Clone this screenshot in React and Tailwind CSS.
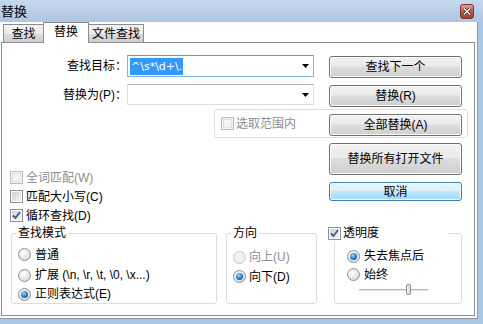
import React from "react";

const font = "font-['Liberation_Sans','Noto_Sans_CJK_SC',sans-serif]";

function Btn({ children, className = "", focus }) {
  const skin = focus
    ? "border-[#3c7fb1] bg-[linear-gradient(#eaf6fd_0%,#d9f0fc_45%,#bee6fd_50%,#a7d9f5_100%)] shadow-[inset_0_0_0_1px_#f4fbff]"
    : "border-[#707070] bg-[linear-gradient(#f2f2f2_0%,#ebebeb_45%,#dddddd_50%,#cfcfcf_100%)] shadow-[inset_0_0_0_1px_#fcfcfc]";
  return (
    <div
      className={`flex w-[133px] shrink-0 items-center justify-center rounded-[3px] border text-[12px] leading-none text-black ${skin} ${className}`}
    >
      {children}
    </div>
  );
}

function Check({ checked, disabled }) {
  return (
    <span
      className={`relative flex h-[13px] w-[13px] shrink-0 items-center justify-center border ${
        disabled ? "border-[#bcbcbc] bg-[#f4f4f4]" : "border-[#8e8f8f] bg-white"
      }`}
    >
      <span
        className={`h-[9px] w-[9px] ${
          disabled
            ? "border border-[#e2e2e2] bg-[#f4f4f4]"
            : "bg-[linear-gradient(135deg,#cdd1d6,#f6f6f6)]"
        }`}
      />
      {checked && (
        <svg className="absolute left-[1px] top-[1px]" width="9" height="9" viewBox="0 0 9 9">
          <path d="M1 4.5 L3.5 7 L8 1" fill="none" stroke="#3b5998" strokeWidth="1.8" />
        </svg>
      )}
    </span>
  );
}

function Radio({ checked, disabled }) {
  return (
    <span
      className={`flex h-[13px] w-[13px] shrink-0 items-center justify-center rounded-full border ${
        disabled
          ? "border-[#c9c9c9] bg-[#f1f1f1]"
          : "border-[#8e8f8f] bg-[radial-gradient(circle_at_40%_35%,#ffffff,#d0d0d0)]"
      }`}
    >
      {checked && (
        <span className="h-[7px] w-[7px] rounded-full bg-[radial-gradient(circle_at_40%_35%,#9ad8ff,#1f78c2_55%,#0b4a86)]" />
      )}
    </span>
  );
}

function Tab({ children, active, className = "" }) {
  return active ? (
    <div
      className={`relative z-10 -mb-px -ml-px flex h-[21px] items-center justify-center border border-b-0 border-[#898c95] bg-white pb-[2px] ${className}`}
    >
      {children}
    </div>
  ) : (
    <div
      className={`flex h-[18px] items-center justify-center border border-b-0 border-[#898c95] bg-[linear-gradient(#f3f3f3,#ebebeb_50%,#dcdcdc_51%,#cfcfcf)] pt-[1px] ${className}`}
    >
      {children}
    </div>
  );
}

function Arrow() {
  return (
    <svg width="7" height="4" viewBox="0 0 7 4" className="ml-auto mr-[4px]">
      <path d="M0 0 H7 L3.5 4 Z" fill="#000" />
    </svg>
  );
}

export default function App() {
  return (
    <div className={`flex h-[324px] w-[483px] flex-col bg-[#a9c7e6] text-[12px] text-black ${font}`}>
      {/* title bar */}
      <div className="flex h-[22px] shrink-0 items-center bg-[linear-gradient(#c6d9ee,#adc6e2)] pl-[1px]">
        <span className="text-[13px] leading-none">替换</span>
        <div className="ml-auto mr-[9px] flex h-[15px] w-[14px] items-center justify-center rounded-[3px] border border-[#6e3a33] bg-[linear-gradient(#e3a294,#c05a48_50%,#a83d2c)]">
          <svg width="8" height="7" viewBox="0 0 8 7">
            <path d="M1 0.5 L7 6.5 M7 0.5 L1 6.5" stroke="#3b1d18" strokeWidth="2.6" />
            <path d="M1 0.5 L7 6.5 M7 0.5 L1 6.5" stroke="#fff" strokeWidth="1.4" />
          </svg>
        </div>
      </div>

      <div className="h-[297px] w-[478px] border-b border-r border-[#8d98a6] bg-white">
        {/* tabs */}
        <div className="flex h-[20px] items-end pl-[3px] leading-none">
          <Tab className="w-[41px]">查找</Tab>
          <Tab active className="w-[46px]">替换</Tab>
          <Tab className="-ml-px w-[56px]">文件查找</Tab>
        </div>

        {/* tab page */}
        <div className="ml-px h-[274px] w-[474px] border border-[#898c95] leading-none">
          {/* row 1 */}
          <div className="mt-[12px] flex h-[23px] items-start">
            <div className="flex h-[22px] w-[125px] items-center justify-end">查找目标：</div>
            <div className="flex h-[22px] w-[187px] items-center border border-[#7eb4ea] border-t-[#569de5]">
              <span className="ml-[2px] bg-[#3399ff] px-[1px] py-[3px] font-['DejaVu_Sans',sans-serif] text-[11px] text-white">
                ^\s*\d+\.
              </span>
              <Arrow />
            </div>
            <Btn className="ml-[15px] mt-[1px] h-[22px]">查找下一个</Btn>
          </div>

          {/* row 2 */}
          <div className="mt-[6px] flex h-[23px] items-start">
            <div className="flex h-[21px] w-[125px] items-center justify-end">替换为(P)：</div>
            <div className="flex h-[21px] w-[187px] items-center border border-[#dbdfe6] border-t-[#abadb3]">
              <Arrow />
            </div>
            <Btn className="ml-[15px] mt-[1px] h-[22px]">替换(R)</Btn>
          </div>

          {/* row 3 */}
          <div className="ml-[212px] mt-[2px] flex h-[29px] w-[254px] items-center rounded-[3px] border border-[#d5dfe5] pl-[6px] pr-[5px]">
            <Check disabled />
            <span className="ml-[2px] text-[#8d8d8d]">选取范围内</span>
            <Btn className="ml-auto mt-[2px] h-[22px]">全部替换(A)</Btn>
          </div>

          {/* middle */}
          <div className="flex h-[87px]">
            <div className="flex w-[327px] flex-col pl-[8px] pt-[30px]">
              <div className="flex h-[19px] items-center gap-[3px] text-[#8d8d8d]">
                <Check disabled />
                全词匹配(W)
              </div>
              <div className="flex h-[19px] items-center gap-[3px]">
                <Check />
                匹配大小写(C)
              </div>
              <div className="flex h-[19px] items-center gap-[3px]">
                <Check checked />
                循环查找(D)
              </div>
            </div>
            <div className="flex flex-col">
              <Btn className="mt-[5px] h-[32px]">替换所有打开文件</Btn>
              <Btn focus className="mt-[7px] h-[19px]">取消</Btn>
            </div>
          </div>

          {/* groups */}
          <div className="flex items-start">
            <fieldset className="ml-[9px] h-[79px] w-[206px] rounded-[3px] border border-[#d5dfe5]">
              <legend className="ml-[4px] px-[2px] leading-[16px]">查找模式</legend>
              <div className="flex flex-col pl-[6px] pt-[3px]">
                <div className="flex h-[21px] items-center gap-[4px]">
                  <Radio />
                  普通
                </div>
                <div className="flex h-[20px] items-center gap-[4px]">
                  <Radio />
                  扩展 (\n, \r, \t, \0, \x...)
                </div>
                <div className="flex h-[18px] items-center gap-[4px]">
                  <Radio checked />
                  正则表达式(E)
                </div>
              </div>
            </fieldset>

            <fieldset className="ml-[9px] h-[79px] w-[91px] rounded-[3px] border border-[#d5dfe5]">
              <legend className="ml-[4px] px-[2px] leading-[16px]">方向</legend>
              <div className="flex flex-col pl-[6px] pt-[6px]">
                <div className="flex h-[20px] items-center gap-[3px] text-[#8d8d8d]">
                  <Radio disabled />
                  向上(U)
                </div>
                <div className="flex h-[19px] items-center gap-[3px]">
                  <Radio checked />
                  向下(D)
                </div>
              </div>
            </fieldset>

            <fieldset className="ml-[17px] h-[79px] w-[128px] rounded-[3px] border border-[#d5dfe5]">
              <legend className="-ml-[7px] flex h-[16px] w-[120px] items-center gap-[2px] bg-white">
                <Check checked />
                透明度
              </legend>
              <div className="flex flex-col pl-[12px] pt-[5px]">
                <div className="flex h-[20px] items-center gap-[4px]">
                  <Radio checked />
                  失去焦点后
                </div>
                <div className="flex h-[17px] items-center gap-[4px]">
                  <Radio />
                  始终
                </div>
                <div className="relative ml-[12px] mt-[1px] flex h-[11px] w-[69px] items-center">
                  <div className="h-[2px] w-full border-t border-[#b4b4b4] bg-[#e8e8e8]" />
                  <div className="absolute left-[47px] top-0 h-[11px] w-[5px] rounded-[2px] border border-[#8e8f8f] bg-[linear-gradient(90deg,#f4f4f4,#d6d6d6)]" />
                </div>
              </div>
            </fieldset>
          </div>
        </div>
      </div>
    </div>
  );
}
